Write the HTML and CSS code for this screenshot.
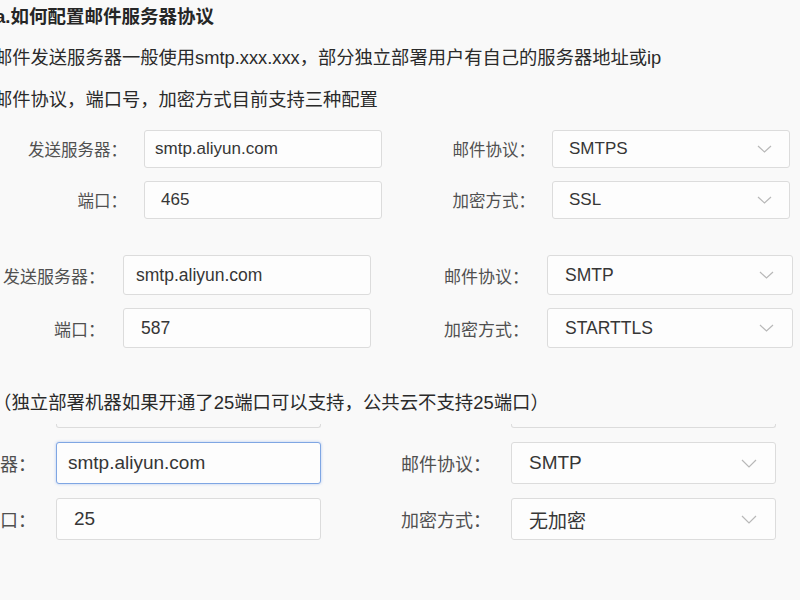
FILE: index.html
```html
<!DOCTYPE html>
<html lang="zh-CN">
<head>
    <meta charset="UTF-8">
    <meta name="viewport" content="width=device-width, initial-scale=1.0">
    <title>邮件服务器配置</title>
    <link rel="stylesheet" href="styles.css">
</head>
<body>
    <div class="doc">
        <h3 class="doc-title">a.如何配置邮件服务器协议</h3>
        <p class="doc-text">邮件发送服务器一般使用smtp.xxx.xxx，部分独立部署用户有自己的服务器地址或ip</p>
        <p class="doc-text">邮件协议，端口号，加密方式目前支持三种配置</p>

        <!-- SMTPS + SSL -->
        <div class="config config-ssl">
            <label class="label">发送服务器：</label>
            <div class="field">smtp.aliyun.com</div>
            <label class="label">邮件协议：</label>
            <div class="field select">
                <span class="value">SMTPS</span>
                <svg class="chevron" width="15" height="8" viewBox="0 0 15 8"><polyline points="1,1 7.5,7 14,1"/></svg>
            </div>
            <label class="label">端口：</label>
            <div class="field port">465</div>
            <label class="label">加密方式：</label>
            <div class="field select">
                <span class="value">SSL</span>
                <svg class="chevron" width="15" height="8" viewBox="0 0 15 8"><polyline points="1,1 7.5,7 14,1"/></svg>
            </div>
        </div>

        <!-- SMTP + STARTTLS -->
        <div class="config config-tls">
            <label class="label">发送服务器：</label>
            <div class="field">smtp.aliyun.com</div>
            <label class="label">邮件协议：</label>
            <div class="field select">
                <span class="value">SMTP</span>
                <svg class="chevron" width="15" height="8" viewBox="0 0 15 8"><polyline points="1,1 7.5,7 14,1"/></svg>
            </div>
            <label class="label">端口：</label>
            <div class="field port">587</div>
            <label class="label">加密方式：</label>
            <div class="field select">
                <span class="value">STARTTLS</span>
                <svg class="chevron" width="15" height="8" viewBox="0 0 15 8"><polyline points="1,1 7.5,7 14,1"/></svg>
            </div>
        </div>

        <p class="doc-note">（独立部署机器如果开通了25端口可以支持，公共云不支持25端口）</p>

        <!-- SMTP 无加密 -->
        <div class="config config-plain">
            <span></span>
            <div class="edge"></div>
            <span></span>
            <div class="edge"></div>
            <label class="label">发送服务器：</label>
            <div class="field focused">smtp.aliyun.com</div>
            <label class="label">邮件协议：</label>
            <div class="field select">
                <span class="value">SMTP</span>
                <svg class="chevron" width="16" height="9" viewBox="0 0 16 9"><polyline points="1,1 8,8 15,1"/></svg>
            </div>
            <label class="label">端口：</label>
            <div class="field port">25</div>
            <label class="label">加密方式：</label>
            <div class="field select">
                <span class="value">无加密</span>
                <svg class="chevron" width="16" height="9" viewBox="0 0 16 9"><polyline points="1,1 8,8 15,1"/></svg>
            </div>
        </div>
    </div>
</body>
</html>
```

FILE: styles.css
```css
body {
    margin: 0;
    padding: 0;
    background-color: #f9f9f9;
    font-family: "Liberation Sans", "Noto Sans CJK SC", sans-serif;
    color: #2a2a2a;
    overflow: hidden;
}
.doc {
    width: 800px;
}
.doc-title {
    margin: 0 0 3px -5px;
    font-size: 18.5px;
    font-weight: bold;
    line-height: 34px;
    color: #262626;
}
.doc-text {
    margin: 0 0 0 -6px;
    font-size: 18.3px;
    line-height: 42px;
    white-space: nowrap;
}
.doc-note {
    margin: 34px 0 0 -7px;
    font-size: 18.4px;
    line-height: 42px;
    white-space: nowrap;
}

/* form blocks */
.config {
    display: grid;
    align-items: center;
}
.label {
    display: flex;
    justify-content: flex-end;
    color: #505050;
    white-space: nowrap;
}
.field {
    box-sizing: border-box;
    height: 100%;
    display: flex;
    align-items: center;
    background-color: #fdfdfd;
    border: 1px solid #dcdcdc;
    border-radius: 3px;
    color: #363636;
    white-space: nowrap;
}
.select {
    justify-content: space-between;
}
.chevron {
    fill: none;
    stroke: #b8b8b8;
    stroke-width: 1.2;
}
.focused {
    border-color: #7fa6e3;
    box-shadow: 0 0 3px rgba(90, 140, 230, 0.45);
}
.edge {
    box-sizing: border-box;
    height: 4px;
    border: 1px solid #dcdcdc;
    border-top: none;
    border-radius: 0 0 3px 3px;
}

.config-ssl {
    margin-top: 9px;
    grid-template-columns: 144px 238px 170px 238px;
    grid-template-rows: 38px 38px;
    row-gap: 13px;
}
.config-ssl .label {
    font-size: 16.5px;
    padding-right: 17px;
}
.config-ssl .field {
    font-size: 17px;
    padding: 0 10px;
}
.config-ssl .port,
.config-ssl .select {
    padding-left: 16px;
}
.config-ssl .select {
    padding-right: 17px;
}

.config-tls {
    margin-top: 36px;
    grid-template-columns: 123px 248px 176px 246px;
    grid-template-rows: 40px 40px;
    row-gap: 13px;
}
.config-tls .label {
    font-size: 17px;
    padding-right: 18px;
}
.config-tls .field {
    font-size: 17.5px;
    padding: 0 12px;
}
.config-tls .port,
.config-tls .select {
    padding-left: 17px;
}
.config-tls .select {
    padding-right: 18px;
}

.config-plain {
    grid-template-columns: 56px 265px 190px 265px;
    grid-template-rows: 4px 42px 42px;
    row-gap: 14px;
}
.config-plain .label {
    font-size: 18px;
    padding-right: 20px;
}
.config-plain .field {
    font-size: 19px;
    padding: 0 11px;
}
.config-plain .port,
.config-plain .select {
    padding-left: 17px;
}
.config-plain .select {
    padding-right: 18px;
}
```
